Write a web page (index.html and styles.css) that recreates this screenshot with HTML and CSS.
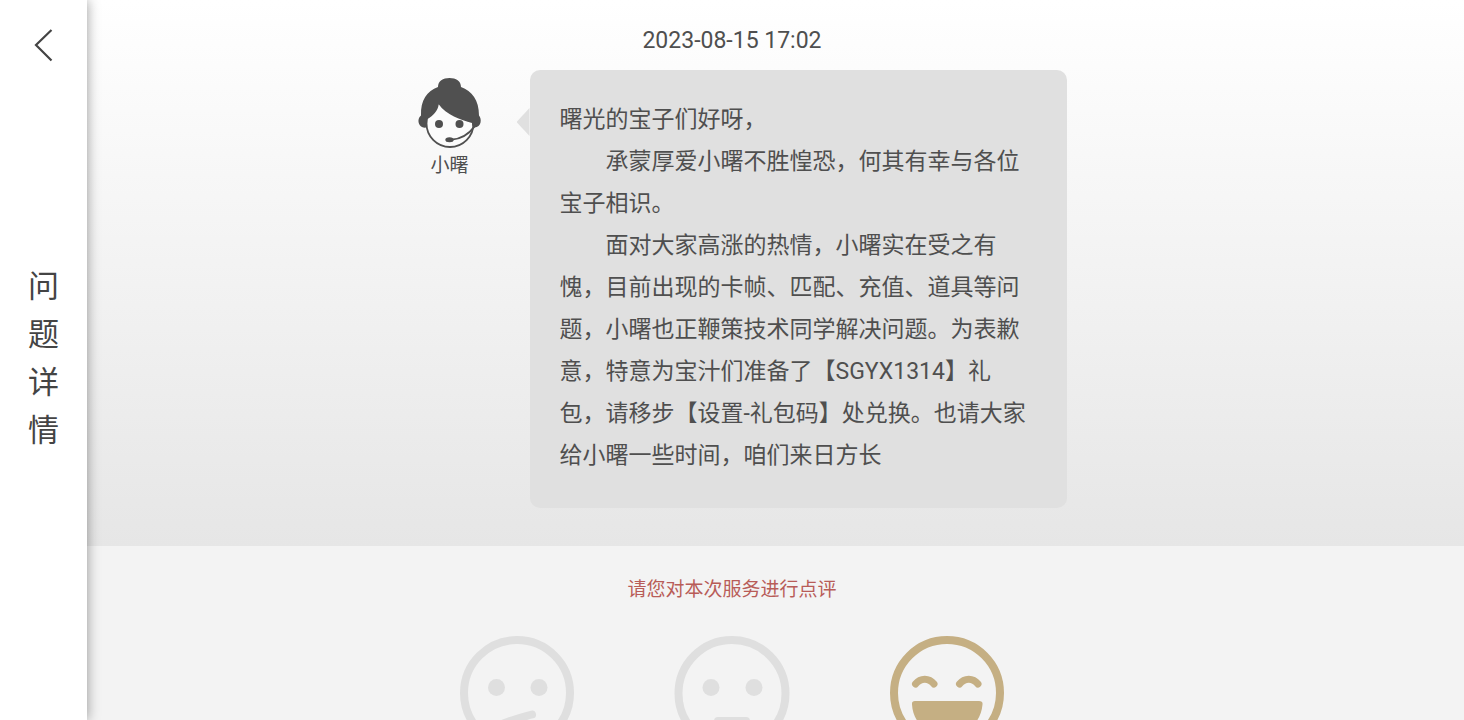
FILE: index.html
```html
<!DOCTYPE html>
<html lang="zh-CN">
<head>
<meta charset="utf-8">
<meta name="viewport" content="width=device-width, initial-scale=1">
<title>问题详情</title>
<link rel="stylesheet" href="styles.css">
</head>
<body>
<div class="app">
  <header class="sidebar">
    <button class="back" type="button" aria-label="返回">
      <svg width="20" height="34" viewBox="0 0 20 34" fill="none" stroke="#444" stroke-width="2.2"><path d="M17.500 2L2 17L17.500 32.500"/></svg>
    </button>
    <h1 class="title">问题详情</h1>
  </header>
  <main class="main">
    <section class="chat">
      <time class="date" datetime="2023-08-15T17:02">2023-08-15 17:02</time>
      <article class="message">
        <div class="agent">
          <svg width="64" height="72" viewBox="0 0 64 72">
            <circle cx="32" cy="46.500" r="23.500" fill="#fcfcfc" stroke="#505050" stroke-width="1.800"/>
            <path d="M20 10C20 4 25 1 31.500 1C38 1 43 4 43 10C54 14 61 23 61 38.500C64 42 63.500 50 56.500 50.500C54.500 50.500 54 48 54 46C43 43 28 38 20.700 27.300C20 34 15 39 9 42.300C8 45 8 48 8.500 50.500C3 51.500 0 47 .5 43C.8 41 1.500 40 3 38.500C2.500 23 9 14 20 10Z" fill="#505050"/>
            <circle cx="21" cy="47" r="4" fill="#505050"/>
            <circle cx="41.500" cy="47" r="4" fill="#505050"/>
            <path d="M56.500 49.500C51 57 44 62 33 62.800" fill="none" stroke="#505050" stroke-width="2"/>
            <ellipse cx="31.500" cy="62.800" rx="4.200" ry="2.500" fill="#505050"/>
          </svg>
          <span class="agent-name">小曙</span>
        </div>
        <div class="bubble">
          <p>曙光的宝子们好呀，</p>
          <p class="indent">承蒙厚爱小曙不胜惶恐，何其有幸与各位宝子相识。</p>
          <p class="indent">面对大家高涨的热情，小曙实在受之有愧，目前出现的卡帧、匹配、充值、道具等问题，小曙也正鞭策技术同学解决问题。为表歉意，特意为宝汁们准备了【SGYX1314】礼包，请移步【设置-礼包码】处兑换。也请大家给小曙一些时间，咱们来日方长</p>
        </div>
      </article>
    </section>
    <form class="rating">
      <fieldset class="rating-set">
        <legend class="rating-title">请您对本次服务进行点评</legend>
        <div class="faces">
          <label class="face">
            <input type="radio" name="score" value="1" aria-label="不满意">
            <svg viewBox="0 0 116 116" fill="none" stroke="currentColor">
              <circle cx="58" cy="58" r="53" stroke-width="8"/>
              <g fill="currentColor" stroke="none"><circle cx="37.500" cy="52.500" r="8.500"/><circle cx="80" cy="52.500" r="8.500"/></g>
              <path d="M37 92Q45 87 73 79.500" stroke-width="8" stroke-linecap="round"/>
            </svg>
          </label>
          <label class="face">
            <input type="radio" name="score" value="2" aria-label="一般">
            <svg viewBox="0 0 116 116" fill="none" stroke="currentColor">
              <circle cx="58" cy="58.500" r="53.500" stroke-width="8"/>
              <g fill="currentColor" stroke="none"><circle cx="37" cy="52.500" r="8.500"/><circle cx="80" cy="52.500" r="8.500"/></g>
              <path d="M44 86H72" stroke-width="8" stroke-linecap="round"/>
            </svg>
          </label>
          <label class="face">
            <input type="radio" name="score" value="3" aria-label="满意" checked>
            <svg viewBox="0 0 116 116" fill="none" stroke="currentColor">
              <circle cx="58" cy="58" r="53" stroke-width="8"/>
              <path d="M26.500 49C31.500 42.500 40 42.500 45 49M70.500 49C75.500 42.500 84 42.500 89 49" stroke-width="7" stroke-linecap="round"/>
              <path d="M26 66H90Q94 66 93.500 69.500C92 88 77 101 58 101C39 101 24 88 23 69.500Q22.500 66 26 66Z" fill="currentColor" stroke="none"/>
            </svg>
          </label>
        </div>
      </fieldset>
    </form>
  </main>
</div>
</body>
</html>
```
FILE: styles.css
```css
* {
  box-sizing: border-box;
}

body {
  margin: 0;
  font-family: Roboto, "Noto Sans CJK SC", sans-serif;
  color: #4f4f4f;
  background: #f3f3f3;
}

.app {
  --rail: 87px;
  display: grid;
  grid-template-columns: var(--rail) minmax(0, 1fr);
  height: 100vh;
  overflow: hidden;
}

.sidebar {
  z-index: 1;
  display: grid;
  grid-template-rows: 1fr auto 1fr;
  justify-items: center;
  padding-bottom: 2px;
  background: #fff;
  box-shadow: 0 0 12px rgba(0, 0, 0, 0.4);
}

.back {
  align-self: start;
  margin-top: 28px;
  padding: 0;
  border: 0;
  background: none;
  cursor: pointer;
}

.back svg {
  display: block;
}

.title {
  width: 1em;
  margin: 0;
  font-size: 31px;
  font-weight: 400;
  line-height: 48px;
  color: #444;
}

.main {
  overflow: hidden;
}

.chat {
  display: flex;
  flex-direction: column;
  align-items: center;
  gap: 14px;
  padding: 24px var(--rail) 38px 0;
  background: linear-gradient(#fff, #e6e6e6);
}

.date {
  padding-top: 2px;
  font-size: 23px;
  line-height: 30px;
}

.message {
  display: flex;
  align-items: flex-start;
  gap: 48px;
  padding-left: 20px;
}

.agent {
  display: flex;
  flex-direction: column;
  align-items: center;
  padding-top: 7px;
}

.agent-name {
  font-size: 19px;
  line-height: 34px;
}

.bubble {
  position: relative;
  width: 100%;
  max-width: 537px;
  padding: 29px 30px 31px;
  border-radius: 10px;
  background: #e0e0e0;
  font-size: 23px;
  line-height: 42px;
}

.bubble::before {
  content: "";
  position: absolute;
  top: 38px;
  left: -13px;
  width: 13px;
  height: 28px;
  background: inherit;
  clip-path: polygon(100% 0, 0 50%, 100% 100%);
}

.bubble p {
  margin: 0;
}

.bubble .indent {
  text-indent: 2em;
}

.rating {
  padding: 28px var(--rail) 30px 0;
}

.rating-set {
  margin: 0;
  padding: 0;
  border: 0;
}

.rating-title {
  margin: 0 auto;
  padding: 0;
  font-size: 19px;
  line-height: 32px;
  color: #b85c58;
}

.faces {
  display: flex;
  justify-content: center;
  gap: 99px;
  padding-top: 29px;
}

.face {
  position: relative;
  width: 116px;
  height: 116px;
  color: #dfdfdf;
  cursor: pointer;
}

.face:has(input:checked) {
  color: #c5af83;
}

.face input {
  position: absolute;
  inset: 0;
  width: 100%;
  height: 100%;
  margin: 0;
  appearance: none;
  cursor: inherit;
}

.face svg {
  display: block;
}
```
